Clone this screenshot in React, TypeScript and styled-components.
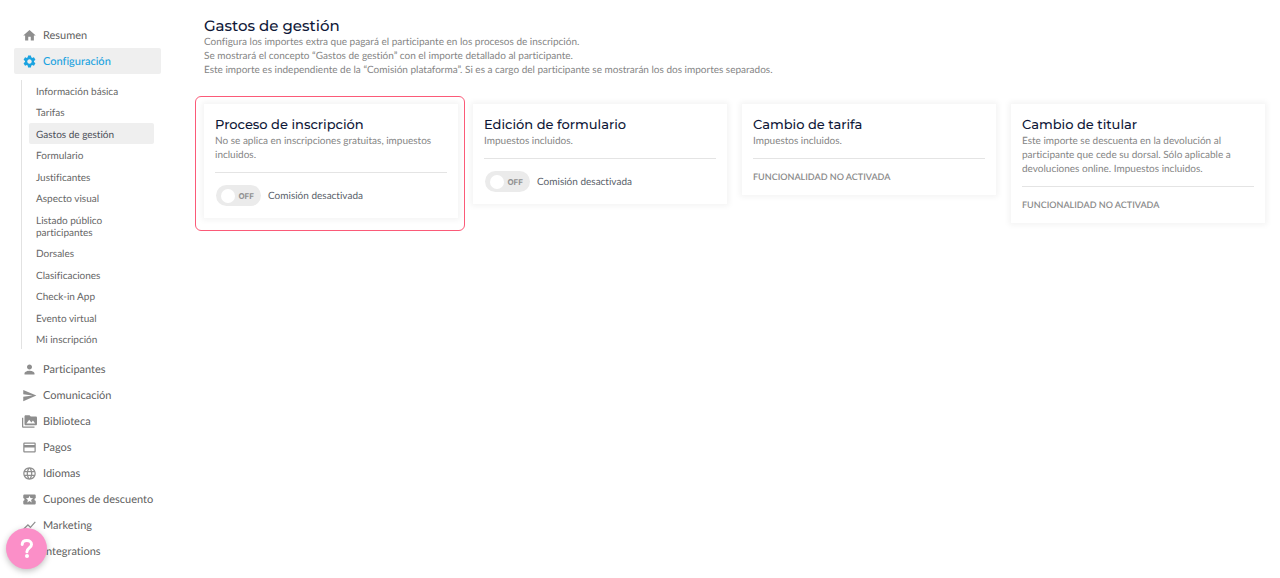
import React from 'react';
import styled, { createGlobalStyle, css } from 'styled-components';
import {
  MdHome,
  MdSettings,
  MdPerson,
  MdSend,
  MdPermMedia,
  MdPayment,
  MdLanguage,
  MdLocalPlay,
  MdShowChart,
  MdExtension,
} from 'react-icons/md';
import type { IconType } from 'react-icons';

const GlobalStyle = createGlobalStyle`
  *, *::before, *::after { box-sizing: border-box; }
  body {
    margin: 0;
    background: #fff;
    color: #5a5f66;
    font-family: Lato, "Open Sans", sans-serif;
    font-size: 10px;
    font-variant-ligatures: none;
    text-rendering: geometricPrecision;
  }
`;

const headingFont = 'Montserrat, Inter, sans-serif';

const Page = styled.div`
  display: flex;
  align-items: flex-start;
`;

const Sidebar = styled.nav`
  flex: none;
  width: 161px;
  padding: 22px 0 14px 14px;
`;

const List = styled.ul`
  display: flex;
  flex-direction: column;
  justify-content: space-between;
  margin: 0;
  padding: 0;
  list-style: none;
`;

const NavLink = styled.a<{ $active?: boolean }>`
  display: flex;
  align-items: center;
  gap: 6px;
  height: 26px;
  padding-left: 8px;
  border-radius: 2px;
  color: ${(p) => (p.$active ? '#1ba3e0' : '#5f5f5f')};
  background: ${(p) => (p.$active ? '#efefef' : 'transparent')};
  font-size: 11px;
  font-weight: ${(p) => (p.$active ? 500 : 400)};
  text-decoration: none;
  white-space: nowrap;

  svg {
    flex: none;
    width: 15px;
    height: 15px;
    color: ${(p) => (p.$active ? '#1ba3e0' : '#8e8e8e')};
  }
`;

const SubList = styled(List)`
  min-height: 269px;
  margin: 6px 7px 7px;
  padding-left: 7px;
  border-left: 1px solid #e2e2e2;
`;

const SubLink = styled.a<{ $active?: boolean }>`
  display: block;
  padding: 6px 16px 3px 7px;
  border-radius: 2px;
  color: ${(p) => (p.$active ? '#4a4e57' : '#666')};
  background: ${(p) => (p.$active ? '#efefef' : 'transparent')};
  line-height: 12px;
  text-decoration: none;
`;

const Main = styled.main`
  flex: 1;
  min-width: 0;
  padding: 16px 15px 16px 43px;
`;

const PageTitle = styled.h1`
  margin: 0;
  color: #0f1838;
  font: 500 15px/19px ${headingFont};
`;

const Description = styled.p`
  margin: 0;
  color: #858585;
  line-height: 14px;
`;

const Cards = styled.div`
  display: grid;
  grid-template-columns: repeat(4, minmax(0, 1fr));
  align-items: start;
  gap: 15px;
  margin-top: 27px;
`;

const Card = styled.section<{ $highlighted?: boolean }>`
  position: relative;
  padding: 13px 11px 12px;
  background: #fff;
  box-shadow: 0 0 6px 2px rgba(0, 0, 0, 0.05);

  ${(p) =>
    p.$highlighted &&
    css`
      &::after {
        content: '';
        position: absolute;
        inset: -8px -7px -13px -9px;
        border: 1px solid #fb5a78;
        border-radius: 6px;
        pointer-events: none;
      }
    `}
`;

const CardTitle = styled.h2`
  margin: 0;
  color: #0f1838;
  font: 500 13px/17px ${headingFont};
`;

const Divider = styled.hr`
  height: 1px;
  margin: 10px 0 12px;
  border: 0;
  background: #e4e4e4;
`;

const Unavailable = styled.p`
  margin: 0;
  color: #8a8a8a;
  font-size: 9px;
  font-weight: 600;
  line-height: 12px;
  text-transform: uppercase;
`;

const ToggleLabel = styled.label`
  display: flex;
  align-items: center;
  gap: 7px;
  margin-left: 1px;
  color: #5a5f6a;
  cursor: pointer;
`;

const Switch = styled.span`
  position: relative;
  display: flex;
  align-items: center;
  justify-content: flex-end;
  width: 45px;
  height: 21px;
  padding-right: 7px;
  border-radius: 11px;
  background: #ebebeb;
  color: #929292;
  font: 700 8px/12px Inter, sans-serif;

  &::before {
    content: '';
    position: absolute;
    top: 4px;
    left: 5px;
    width: 14px;
    height: 14px;
    border-radius: 50%;
    background: #fff;
  }
`;

const SwitchInput = styled.input`
  position: absolute;
  inset: 0;
  margin: 0;
  opacity: 0;
  cursor: pointer;
`;

const HelpButton = styled.button`
  position: fixed;
  left: 6px;
  bottom: 9px;
  display: grid;
  place-items: center;
  width: 41px;
  height: 41px;
  padding: 0;
  border: 0;
  border-radius: 50%;
  background: #fb8fc8;
  box-shadow: 0 2px 6px rgba(0, 0, 0, 0.25);
  cursor: pointer;
`;

type NavEntry = { label: string; icon: IconType; active?: boolean; children?: string[] };

const navigation: NavEntry[] = [
  { label: 'Resumen', icon: MdHome },
  {
    label: 'Configuración',
    icon: MdSettings,
    active: true,
    children: [
      'Información básica',
      'Tarifas',
      'Gastos de gestión',
      'Formulario',
      'Justificantes',
      'Aspecto visual',
      'Listado público participantes',
      'Dorsales',
      'Clasificaciones',
      'Check-in App',
      'Evento virtual',
      'Mi inscripción',
    ],
  },
  { label: 'Participantes', icon: MdPerson },
  { label: 'Comunicación', icon: MdSend },
  { label: 'Biblioteca', icon: MdPermMedia },
  { label: 'Pagos', icon: MdPayment },
  { label: 'Idiomas', icon: MdLanguage },
  { label: 'Cupones de descuento', icon: MdLocalPlay },
  { label: 'Marketing', icon: MdShowChart },
  { label: 'Integrations', icon: MdExtension },
];

type Fee = { title: string; text: string; available: boolean; highlighted?: boolean };

const fees: Fee[] = [
  {
    title: 'Proceso de inscripción',
    text: 'No se aplica en inscripciones gratuitas, impuestos incluidos.',
    available: true,
    highlighted: true,
  },
  { title: 'Edición de formulario', text: 'Impuestos incluidos.', available: true },
  { title: 'Cambio de tarifa', text: 'Impuestos incluidos.', available: false },
  {
    title: 'Cambio de titular',
    text: 'Este importe se descuenta en la devolución al participante que cede su dorsal. Sólo aplicable a devoluciones online. Impuestos incluidos.',
    available: false,
  },
];

function FeeCard({ fee }: { fee: Fee }) {
  return (
    <Card $highlighted={fee.highlighted}>
      <CardTitle>{fee.title}</CardTitle>
      <Description>{fee.text}</Description>
      <Divider />
      {fee.available ? (
        <ToggleLabel>
          <Switch>
            <SwitchInput type="checkbox" role="switch" />
            OFF
          </Switch>
          Comisión desactivada
        </ToggleLabel>
      ) : (
        <Unavailable>Funcionalidad no activada</Unavailable>
      )}
    </Card>
  );
}

export default function App() {
  return (
    <>
      <GlobalStyle />
      <Page>
        <Sidebar>
          <List>
            {navigation.map(({ label, icon: Icon, active, children }) => (
              <li key={label}>
                <NavLink href="#" $active={active}>
                  <Icon />
                  {label}
                </NavLink>
                {children && (
                  <SubList>
                    {children.map((child) => (
                      <li key={child}>
                        <SubLink href="#" $active={child === 'Gastos de gestión'}>
                          {child}
                        </SubLink>
                      </li>
                    ))}
                  </SubList>
                )}
              </li>
            ))}
          </List>
        </Sidebar>
        <Main>
          <PageTitle>Gastos de gestión</PageTitle>
          <Description>
            Configura los importes extra que pagará el participante en los procesos de inscripción.
          </Description>
          <Description>
            Se mostrará el concepto “Gastos de gestión” con el importe detallado al participante.
          </Description>
          <Description>
            Este importe es independiente de la “Comisión plataforma”. Si es a cargo del participante se
            mostrarán los dos importes separados.
          </Description>
          <Cards>
            {fees.map((fee) => (
              <FeeCard key={fee.title} fee={fee} />
            ))}
          </Cards>
        </Main>
      </Page>
      <HelpButton type="button" aria-label="Ayuda">
        <svg width="14" height="20" viewBox="0 0 14 20" fill="none" aria-hidden="true">
          <path
            d="M2.2 5.4C2.4 3 4.3 1.6 6.8 1.6c2.7 0 4.7 1.5 4.7 3.9 0 3.4-4.6 3.5-4.6 7.3"
            stroke="#fff"
            strokeWidth="3"
            strokeLinecap="round"
          />
          <circle cx="7" cy="17" r="2" fill="#fff" />
        </svg>
      </HelpButton>
    </>
  );
}
